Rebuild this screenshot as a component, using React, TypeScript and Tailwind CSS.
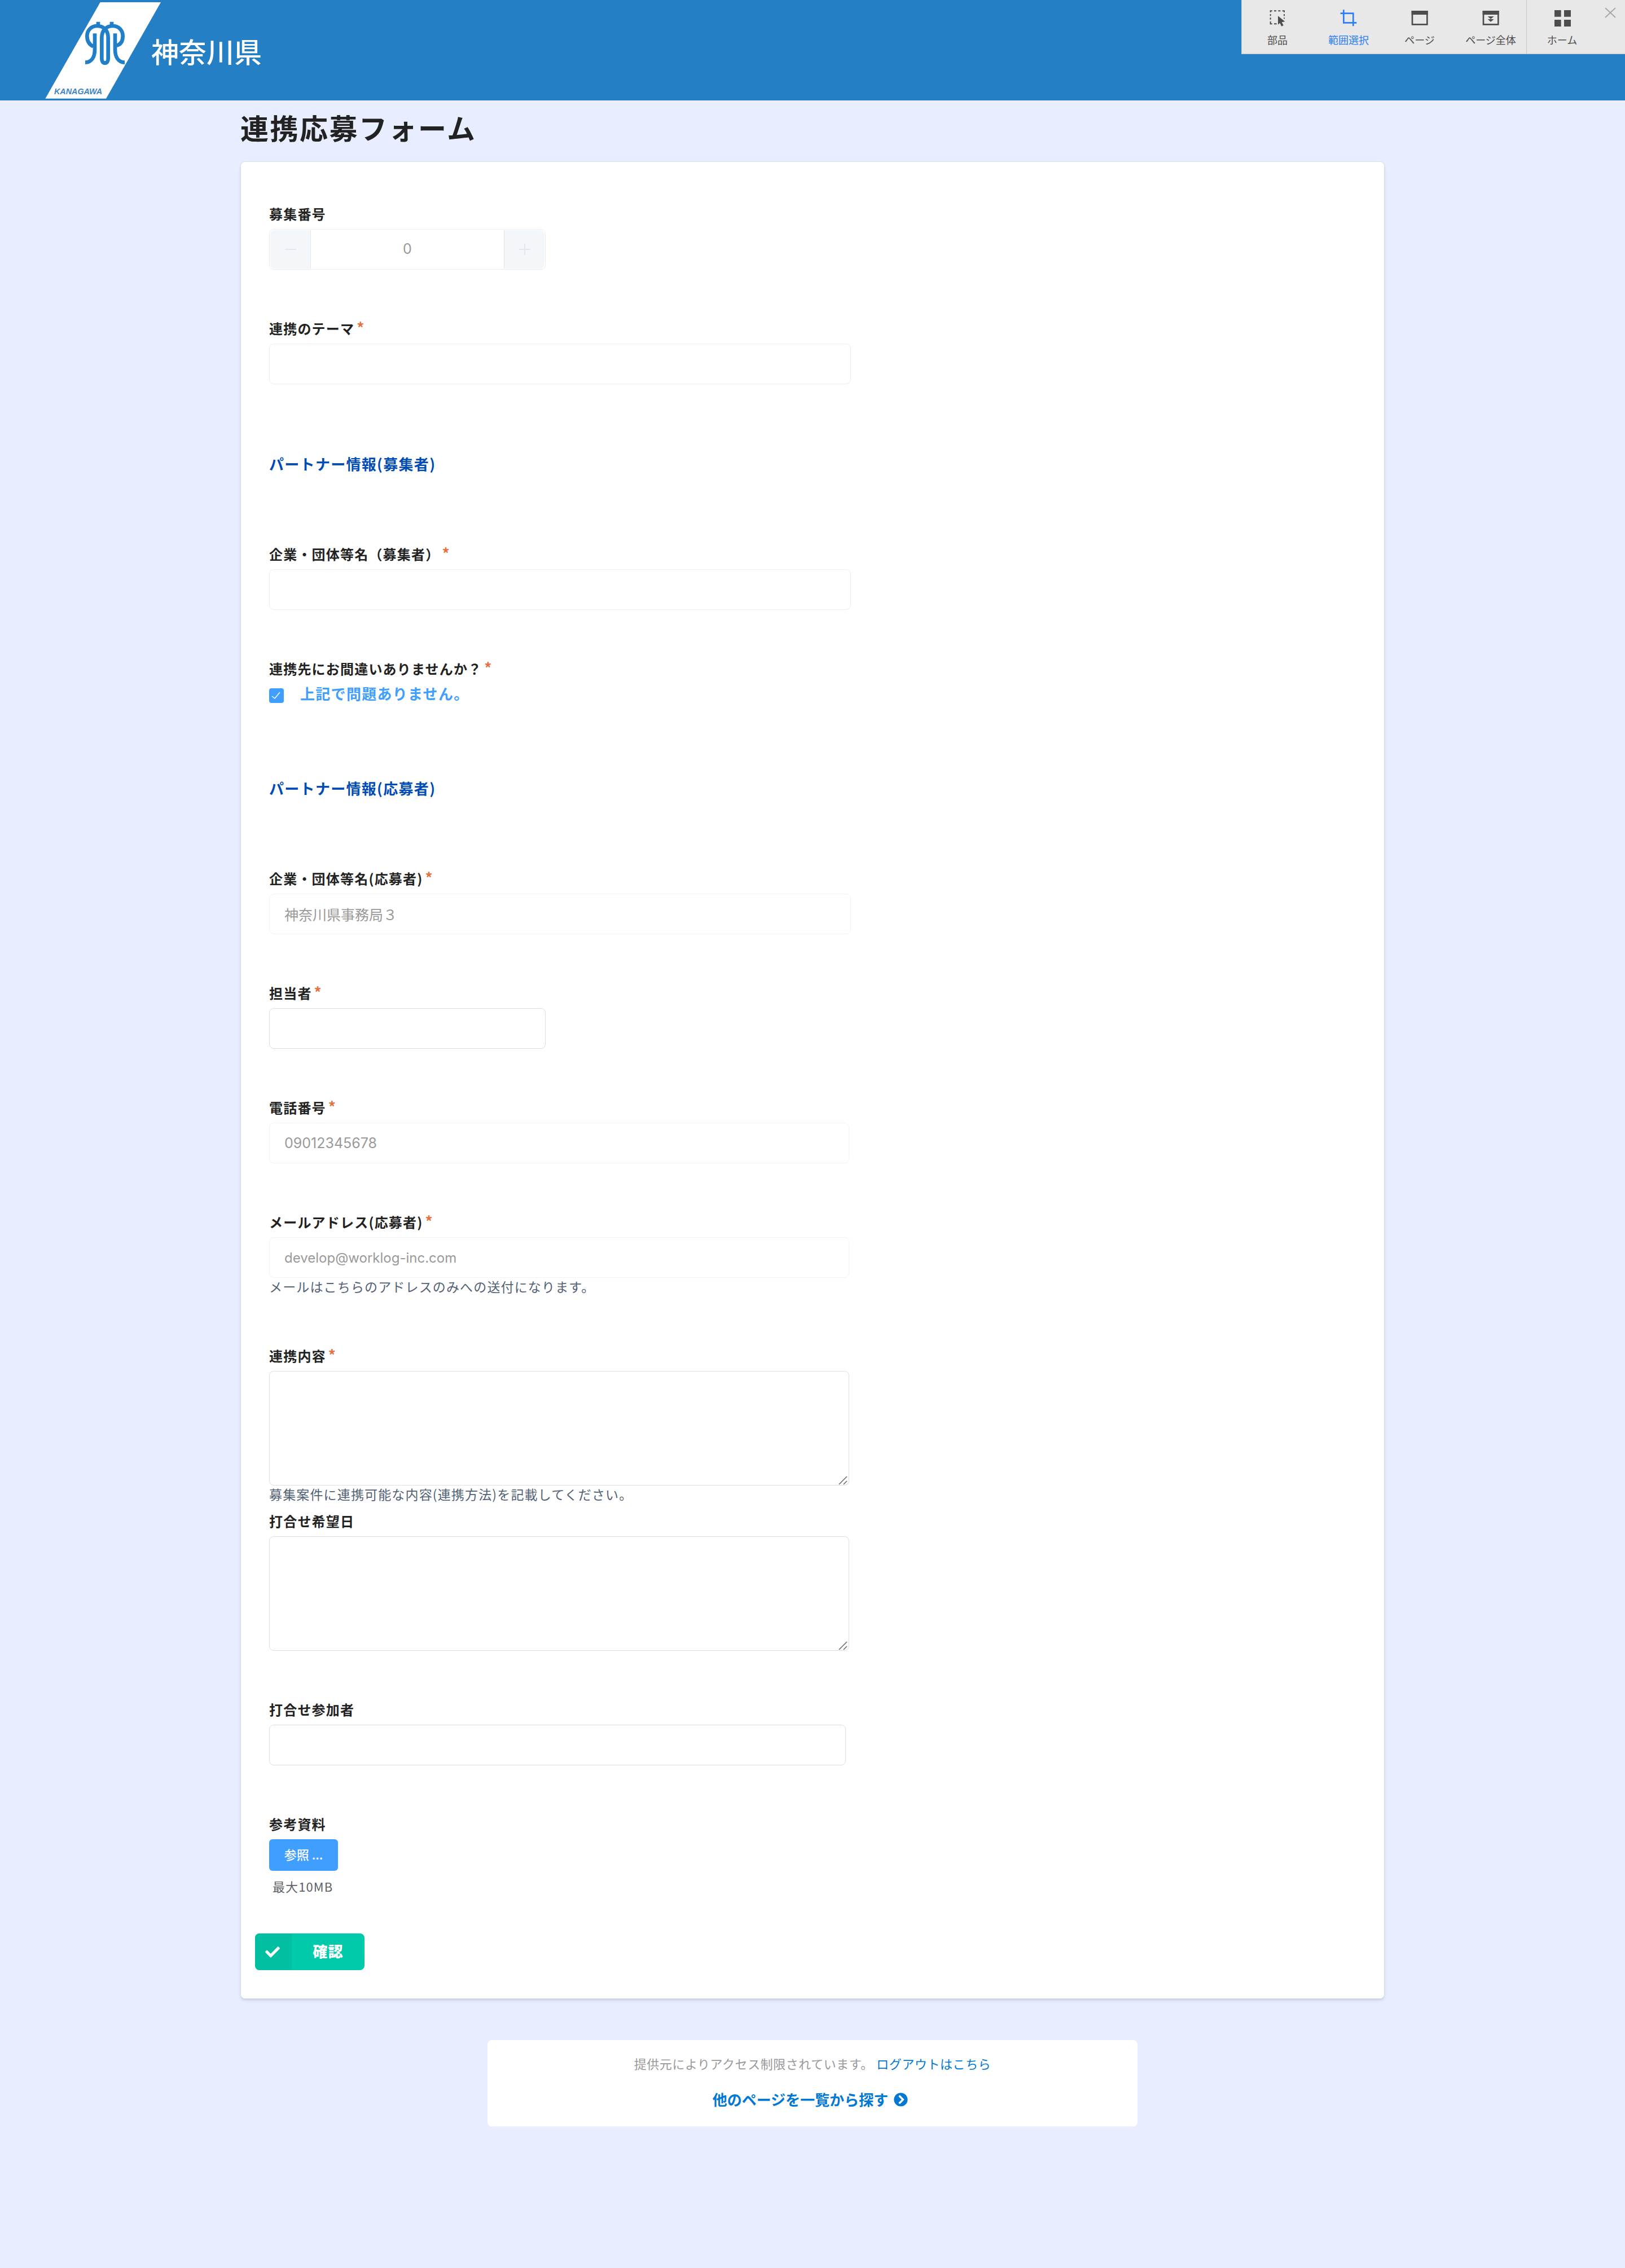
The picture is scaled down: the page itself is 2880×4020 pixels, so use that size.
import type { ReactNode } from "react";
import { FaCheck, FaChevronCircleRight } from "react-icons/fa";

type LabelProps = {
  htmlFor: string;
  required?: boolean;
  children: ReactNode;
};

function Label({ htmlFor, required = false, children }: LabelProps) {
  return (
    <label
      htmlFor={htmlFor}
      className="mb-[10px] flex h-[34px] items-center text-[24px] leading-8 font-bold tracking-wider text-[#222]"
    >
      {children}
      {required && <span className="ml-1 self-start text-[26px] leading-[30px] text-[#e8703f]">*</span>}
    </label>
  );
}

type TextFieldProps = {
  id: string;
  label: string;
  type?: string;
  required?: boolean;
  disabled?: boolean;
  value?: string;
  inputClassName?: string;
  help?: string;
};

function TextField({
  id,
  label,
  type = "text",
  required = false,
  disabled = false,
  value,
  inputClassName = "max-w-[1028px] border-[#dfdfdf]",
  help,
}: TextFieldProps) {
  return (
    <div>
      <Label htmlFor={id} required={required}>
        {label}
      </Label>
      <input
        id={id}
        type={type}
        defaultValue={value}
        disabled={disabled}
        className={`block h-[72px] w-full rounded-lg border bg-white px-[26px] font-[Inter,'Noto_Sans_CJK_JP',sans-serif] text-[#999] ${
          type === "email" ? "text-[24px]" : "text-[25px]"
        } ${inputClassName}`}
      />
      {help && <Help>{help}</Help>}
    </div>
  );
}

function TextArea({ id, label, required = false, help }: TextFieldProps) {
  return (
    <div>
      <Label htmlFor={id} required={required}>
        {label}
      </Label>
      <div className="relative w-full max-w-[1028px]">
        <textarea
          id={id}
          className="block h-[203px] w-full resize-none rounded-lg border border-[#dfdfdf] bg-white px-[26px] py-3 text-[25px]"
        />
        <svg viewBox="0 0 16 16" className="pointer-events-none absolute right-[3px] bottom-[1px] size-4" aria-hidden="true">
          <path d="M1 15 15 1M9 15l6-6" stroke="#666" strokeWidth="1.5" fill="none" />
        </svg>
      </div>
      {help && <Help>{help}</Help>}
    </div>
  );
}

function Help({ children }: { children: ReactNode }) {
  return <p className="pb-1 text-[23px] leading-[30px] tracking-wider text-[#526176]">{children}</p>;
}

function SectionTitle({ children }: { children: ReactNode }) {
  return (
    <h2 className="mt-[35px] mb-[37px] text-[26px] leading-[38px] font-bold tracking-wider text-[#004bb5]">{children}</h2>
  );
}

type ToolButtonProps = {
  label: string;
  className?: string;
  children: ReactNode;
};

function ToolButton({ label, className = "text-[#4d4d4d]", children }: ToolButtonProps) {
  return (
    <button type="button" className={`flex w-[126px] flex-col items-center pt-4 ${className}`}>
      <svg viewBox="0 0 96 96" className="size-8" fill="none" stroke="currentColor" strokeWidth="8" aria-hidden="true">
        {children}
      </svg>
      <span className="mt-[10px] text-[18px] leading-6">{label}</span>
    </button>
  );
}

function CaptureToolbar() {
  return (
    <div className="ml-auto flex h-24 border-b border-l border-[#c8c8c8] bg-[#e8e8e8]">
      <ToolButton label="部品">
        <path
          strokeWidth="6"
          d="M11 17V10H20M30 10H42M52 10H64M74 10H84V17M84 27V37M11 27V37M11 46V56M11 66V79H20M30 79H44M84 46V52"
        />
        <path fill="currentColor" stroke="none" d="M51 37V83L61 74L70 92L80 87L71 70L88 67Z" />
      </ToolButton>
      <ToolButton label="範囲選択" className="text-[#2a7dff]">
        <path d="M22 4V73H91M5 23H73V91" />
      </ToolButton>
      <ToolButton label="ページ">
        <path d="M9 13H88V82H9Z" />
        <path fill="currentColor" stroke="none" d="M5 9H92V30H5Z" />
      </ToolButton>
      <ToolButton label="ページ全体">
        <path d="M9 13H88V82H9Z" />
        <path fill="currentColor" stroke="none" d="M5 9H92V30H5ZM32 39H65L48 53ZM32 54H65L48 68Z" />
      </ToolButton>
      <ToolButton label="ホーム" className="border-l border-[#c8c8c8] text-[#4d4d4d]">
        <path fill="currentColor" stroke="none" d="M6 6H41V41H6ZM57 6H93V41H57ZM6 57H41V93H6ZM57 57H93V93H57Z" />
      </ToolButton>
      <button type="button" aria-label="閉じる" className="flex w-[49px] justify-center pt-3 pr-1">
        <svg viewBox="0 0 20 20" className="size-5" aria-hidden="true">
          <path d="m1 2 18 17M19 2 1 19" stroke="#a8a8a8" strokeWidth="2" fill="none" />
        </svg>
      </button>
    </div>
  );
}

function Logo() {
  return (
    <a href="#" className="flex items-center text-white">
      <svg viewBox="30 0 618 534" className="h-[178px] w-[206px]" aria-hidden="true">
        <path d="M323 12H645L354 524H31Z" fill="#fff" />
        <g fill="none" stroke="#1f7fc8" strokeWidth="20">
          <path d="M312 116V138M384 116V138" />
          <path d="M286 247C262 236 253 216 253 192C253 160 276 138 306 138C340 138 365 160 365 200V312C365 328 358 335 348 335C338 335 331 328 331 312V200C331 160 356 138 390 138C420 138 443 160 443 192C443 216 434 236 410 242" />
          <path d="M294 178V262C294 302 278 332 243 332" />
          <path d="M402 178V262C402 302 418 332 453 332" />
          <path d="M348 150V172" />
        </g>
        <text
          x="78"
          y="500"
          fill="#3f84c4"
          fontFamily="Liberation Sans, sans-serif"
          fontSize="43"
          fontStyle="italic"
          fontWeight="bold"
        >
          KANAGAWA
        </text>
      </svg>
      <span className="-ml-[18px] text-[49px] leading-none font-medium">神奈川県</span>
    </a>
  );
}

export default function App() {
  return (
    <div className="min-h-screen bg-[#e8eeff] pb-[251px] font-['Noto_Sans_CJK_JP',sans-serif]">
      <header className="flex h-[178px] bg-[#247fc5] pl-20">
        <Logo />
        <CaptureToolbar />
      </header>

      <main className="mx-auto w-full max-w-[2028px]">
        <h1 className="pb-[14px] text-[50px] leading-[94px] font-bold tracking-wider text-[#222]">連携応募フォーム</h1>

        <form
          className="rounded-lg border border-[#dcdfe8] bg-white px-[50px] pt-[75px] pb-[50px] shadow-md"
          onSubmit={(e) => e.preventDefault()}
        >
          <div className="flex flex-col gap-[87px]">
            <div>
              <Label htmlFor="number">募集番号</Label>
              <div className="flex h-[72px] w-full max-w-[490px] rounded-lg border border-[#eee] bg-white p-px">
                <button
                  type="button"
                  disabled
                  aria-label="減らす"
                  className="flex w-[72px] items-center justify-center rounded-l-lg border-r border-[#e4e7ed] bg-[#f3f7fa]"
                >
                  <span className="h-[2px] w-5 bg-[#e4e8ec]" />
                </button>
                <input
                  id="number"
                  type="text"
                  inputMode="numeric"
                  defaultValue="0"
                  disabled
                  className="min-w-0 flex-1 text-center font-[Inter,sans-serif] text-[25px] text-[#999]"
                />
                <button
                  type="button"
                  disabled
                  aria-label="増やす"
                  className="flex w-[72px] items-center justify-center rounded-r-lg border-l border-[#e4e7ed] bg-[#f3f7fa]"
                >
                  <svg viewBox="0 0 20 20" className="size-5" aria-hidden="true">
                    <path d="M10 0V20M0 10H20" stroke="#e4e8ec" strokeWidth="2" />
                  </svg>
                </button>
              </div>
            </div>

            <TextField id="theme" label="連携のテーマ" required disabled inputClassName="max-w-[1031px] border-[#eee]" />

            <SectionTitle>パートナー情報(募集者)</SectionTitle>

            <TextField
              id="recruiter"
              label="企業・団体等名（募集者）"
              required
              disabled
              inputClassName="max-w-[1031px] border-[#eee]"
            />

            <div className="pb-2">
              <Label htmlFor="confirm" required>
                連携先にお間違いありませんか？
              </Label>
              <div className="flex h-9">
                <span className="relative mt-2 flex size-[26px]">
                  <input
                    id="confirm"
                    type="checkbox"
                    defaultChecked
                    className="size-[26px] appearance-none rounded-[4px] bg-[#409eff]"
                  />
                  <svg viewBox="0 0 26 26" className="pointer-events-none absolute inset-0" aria-hidden="true">
                    <path d="M5 14l5 4L19 7" stroke="#fff" strokeWidth="1.5" fill="none" />
                  </svg>
                </span>
                <label htmlFor="confirm" className="ml-[29px] text-[26px] leading-[34px] font-bold tracking-wider text-[#409eff]">
                  上記で問題ありません。
                </label>
              </div>
            </div>

            <SectionTitle>パートナー情報(応募者)</SectionTitle>

            <TextField
              id="company"
              label="企業・団体等名(応募者)"
              required
              disabled
              value="神奈川県事務局３"
              inputClassName="max-w-[1031px] border-[#f3f3f3]"
            />
            <TextField id="person" label="担当者" required inputClassName="max-w-[490px] border-[#dfdfdf]" />
            <TextField
              id="phone"
              label="電話番号"
              type="tel"
              required
              disabled
              value="09012345678"
              inputClassName="max-w-[1028px] border-[#f3f3f3]"
            />
            <TextField
              id="email"
              label="メールアドレス(応募者)"
              type="email"
              required
              disabled
              value="develop@worklog-inc.com"
              inputClassName="max-w-[1028px] border-[#f3f3f3]"
              help="メールはこちらのアドレスのみへの送付になります。"
            />
            <div className="flex flex-col gap-3">
              <TextArea
                id="content"
                label="連携内容"
                required
                help="募集案件に連携可能な内容(連携方法)を記載してください。"
              />
              <TextArea id="dates" label="打合せ希望日" />
            </div>
            <TextField id="members" label="打合せ参加者" inputClassName="max-w-[1022px] border-[#dfdfdf]" />

            <div>
              <Label htmlFor="file">参考資料</Label>
              <button
                id="file"
                type="button"
                className="block h-14 w-[122px] rounded-md bg-[#409eff] pb-1 text-[22px] leading-8 font-medium text-white"
              >
                参照 ...
              </button>
              <p className="mt-3 ml-[6px] pb-1 text-[22px] leading-[30px] tracking-wider text-[#606266]">最大10MB</p>
            </div>
          </div>

          <button
            type="submit"
            className="mt-[65px] -ml-[25px] flex h-[65px] w-[194px] overflow-hidden rounded-lg bg-[#00caa9] text-white"
          >
            <span className="flex h-full w-[65px] items-center justify-center bg-[#03bfa1] pr-1">
              <FaCheck className="size-[26px]" />
            </span>
            <span className="flex h-full flex-1 items-center justify-center pb-1 text-[26px] font-black tracking-wider">
              確認
            </span>
          </button>
        </form>
      </main>

      <footer className="mx-auto mt-[73px] w-2/5 rounded-lg bg-white pt-6 pb-[30px] text-center">
        <p className="text-[22px] leading-[34px] tracking-wide text-[#999]">
          提供元によりアクセス制限されています。{" "}
          <a href="#" className="text-[#0078d4]">
            ログアウトはこちら
          </a>
        </p>
        <a
          href="#"
          className="mt-[29px] flex items-center justify-center gap-[10px] pr-2 text-[26px] leading-9 font-bold text-[#0078d4]"
        >
          他のページを一覧から探す
          <FaChevronCircleRight className="size-[25px]" />
        </a>
      </footer>
    </div>
  );
}
